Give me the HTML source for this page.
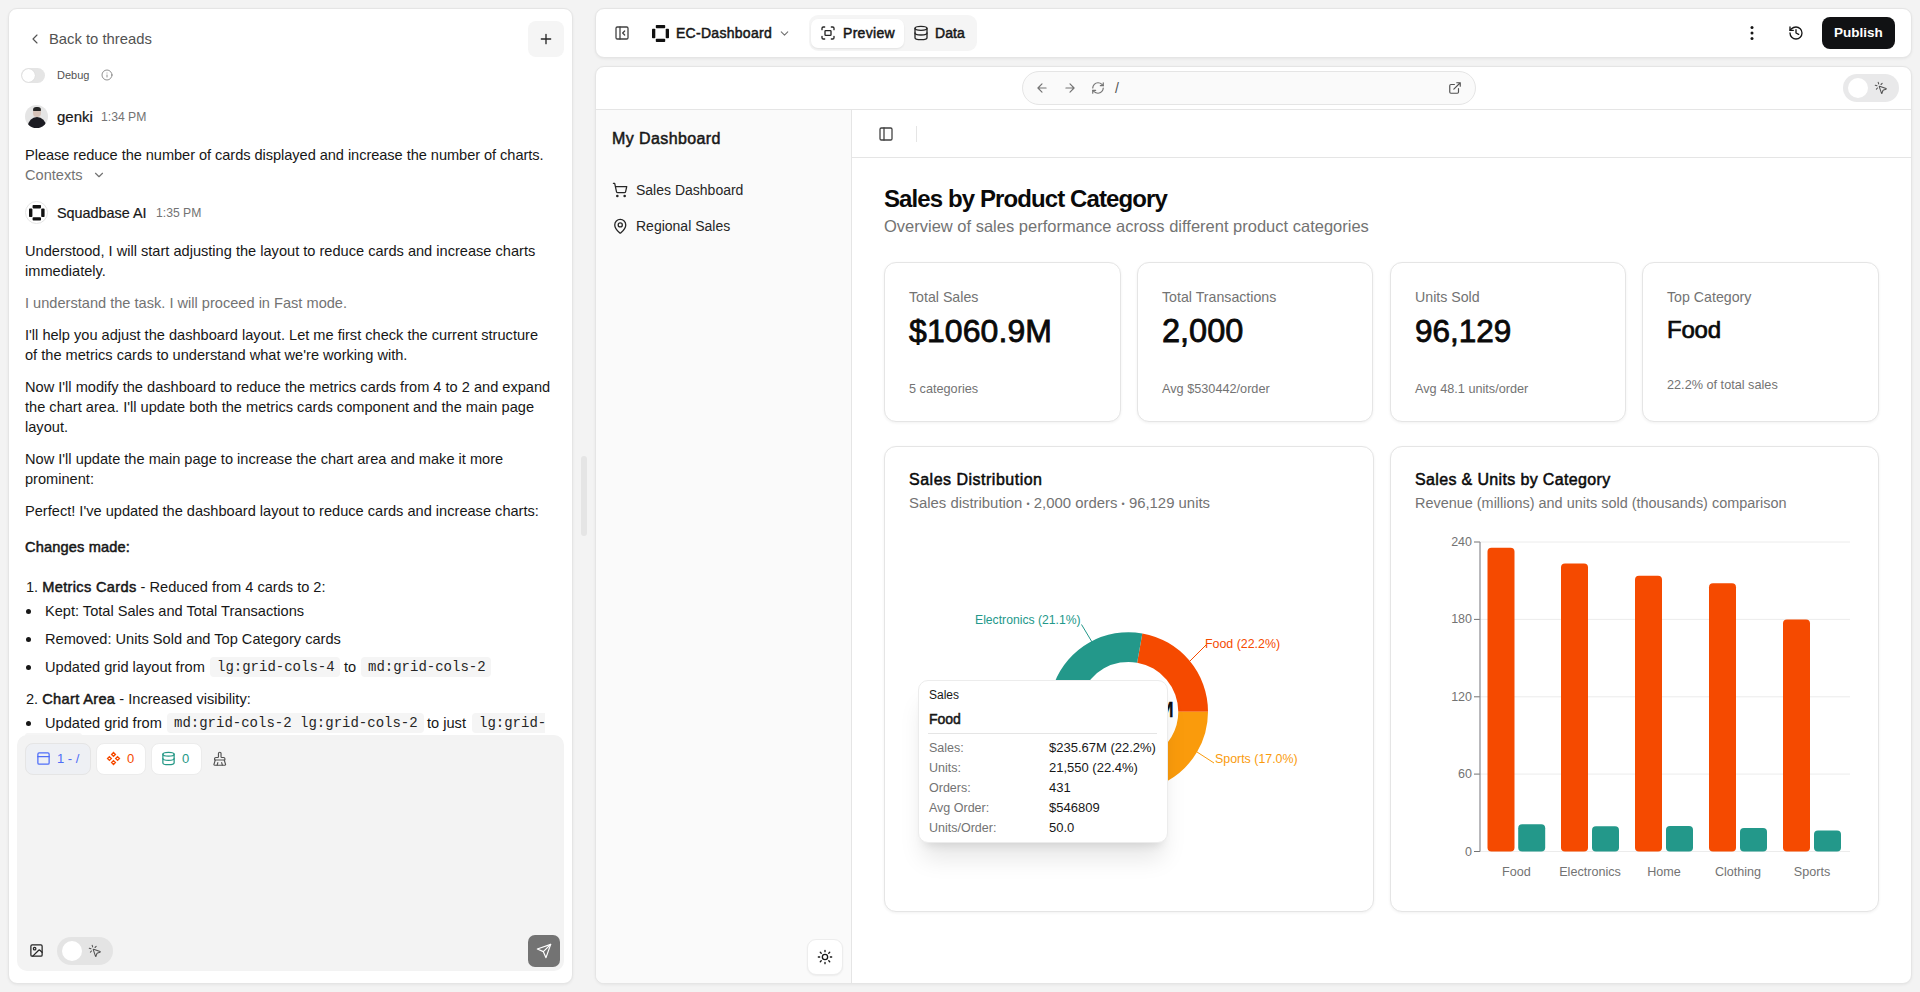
<!DOCTYPE html>
<html><head><meta charset="utf-8">
<style>
*{box-sizing:border-box;margin:0;padding:0}
html,body{width:1920px;height:992px;overflow:hidden;background:#f3f3f3;font-family:"Liberation Sans",sans-serif;color:#171717}
.a{position:absolute}
.t{position:absolute;white-space:nowrap;line-height:20px}
svg{position:absolute;overflow:visible}
.ic{fill:none;stroke:currentColor;stroke-width:2;stroke-linecap:round;stroke-linejoin:round}
.card{position:absolute;background:#fff;border:1px solid #e5e5e5;border-radius:12px;box-shadow:0 1px 3px rgba(0,0,0,.06)}
.p{font-size:14.6px;color:#171717}
.code{position:absolute;background:#f5f5f5;border-radius:4px;font-family:"Liberation Mono",monospace;font-size:14px;line-height:20px;padding:0 7px;white-space:nowrap;color:#262626}
.sb{font-weight:normal!important;-webkit-text-stroke-width:0.5px}
</style></head><body>
<!-- LEFT PANEL -->
<div class="card" style="left:8px;top:8px;width:565px;height:976px;border-radius:9px"></div>
<svg class="ic" style="left:27px;top:31px;color:#525252;stroke-width:1.7" width="16" height="16" viewBox="0 0 24 24"><path d="M15 18l-6-6 6-6"/></svg>
<div class="t" style="left:49px;top:29px;font-size:14.8px;color:#525252">Back to threads</div>
<div class="a" style="left:528px;top:21px;width:36px;height:36px;background:#f5f5f5;border-radius:8px"></div>
<svg class="ic" style="left:538px;top:31px;color:#262626" width="16" height="16" viewBox="0 0 24 24"><path d="M12 5v14M5 12h14"/></svg>
<!-- debug toggle -->
<div class="a" style="left:21px;top:68px;width:24px;height:15px;background:#e5e5e5;border-radius:8px"></div>
<div class="a" style="left:22px;top:69px;width:13px;height:13px;background:#fff;border-radius:50%;box-shadow:0 0 1px rgba(0,0,0,.15)"></div>
<div class="t" style="left:57px;top:65px;font-size:11px;color:#525252">Debug</div>
<svg class="ic" style="left:101px;top:69px;color:#737373;stroke-width:1.6" width="12" height="12" viewBox="0 0 24 24"><circle cx="12" cy="12" r="10"/><path d="M12 16v-4M12 8h.01"/></svg>
<!-- genki -->
<div class="a" style="left:25px;top:105px;width:23px;height:23px;border-radius:50%;background:#e5e5e5;overflow:hidden">
 <div class="a" style="left:8px;top:3px;width:8px;height:9px;border-radius:45%;background:#d6c2b8"></div>
 <div class="a" style="left:8px;top:2px;width:8px;height:4px;border-radius:4px 4px 1px 1px;background:#262626"></div>
 <div class="a" style="left:3px;top:12px;width:18px;height:14px;border-radius:9px 9px 0 0;background:#1c1c22"></div>
</div>
<div class="t" style="left:57px;top:107px;font-size:15px;color:#171717;-webkit-text-stroke:0.2px #171717">genki</div>
<div class="t" style="left:101px;top:107px;font-size:12.2px;color:#737373">1:34 PM</div>
<div class="t p" style="left:25px;top:145px;letter-spacing:-0.05px">Please reduce the number of cards displayed and increase the number of charts.</div>
<div class="t p" style="left:25px;top:165px;color:#737373">Contexts</div>
<svg class="ic" style="left:92px;top:168px;color:#737373" width="14" height="14" viewBox="0 0 24 24"><path d="M6 9l6 6 6-6"/></svg>
<!-- squadbase -->
<div class="a" style="left:25px;top:201px;width:23px;height:23px;border-radius:50%;background:#fff;border:1px solid #e5e5e5"></div>
<svg style="left:29px;top:205px" width="15.6" height="15.6" viewBox="0 0 17 17"><g fill="#111"><rect x="3.9" y="0" width="9.2" height="3.7" rx="0.9"/><rect x="3.9" y="13.3" width="9.2" height="3.7" rx="0.9"/><rect x="0" y="3.9" width="3.7" height="9.2" rx="0.9"/><rect x="13.3" y="3.9" width="3.7" height="9.2" rx="0.9"/></g></svg>
<div class="t" style="left:57px;top:203px;font-size:14.4px;color:#171717;-webkit-text-stroke:0.2px #171717">Squadbase AI</div>
<div class="t" style="left:156px;top:203px;font-size:12.2px;color:#737373">1:35 PM</div>
<!-- paragraphs -->
<div class="t p" style="left:25px;top:241px">Understood, I will start adjusting the layout to reduce cards and increase charts<br>immediately.</div>
<div class="t p" style="left:25px;top:293px;color:#737373">I understand the task. I will proceed in Fast mode.</div>
<div class="t p" style="left:25px;top:325px">I'll help you adjust the dashboard layout. Let me first check the current structure<br>of the metrics cards to understand what we're working with.</div>
<div class="t p" style="left:25px;top:377px">Now I'll modify the dashboard to reduce the metrics cards from 4 to 2 and expand<br>the chart area. I'll update both the metrics cards component and the main page<br>layout.</div>
<div class="t p" style="left:25px;top:449px">Now I'll update the main page to increase the chart area and make it more<br>prominent:</div>
<div class="t p" style="left:25px;top:501px">Perfect! I've updated the dashboard layout to reduce cards and increase charts:</div>
<div class="t p sb" style="left:25px;top:537px;letter-spacing:0.15px">Changes made:</div>
<div class="t p" style="left:26px;top:577px">1. <b class="sb" style="letter-spacing:0.33px">Metrics Cards</b> - Reduced from 4 cards to 2:</div>
<div class="a" style="left:26px;top:609px;width:5px;height:5px;border-radius:50%;background:#171717"></div>
<div class="t p" style="left:45px;top:601px">Kept: Total Sales and Total Transactions</div>
<div class="a" style="left:26px;top:637px;width:5px;height:5px;border-radius:50%;background:#171717"></div>
<div class="t p" style="left:45px;top:629px">Removed: Units Sold and Top Category cards</div>
<div class="a" style="left:26px;top:665px;width:5px;height:5px;border-radius:50%;background:#171717"></div>
<div class="t p" style="left:45px;top:657px">Updated grid layout from</div>
<div class="code" style="left:210px;top:657px;width:130px">lg:grid-cols-4</div>
<div class="t p" style="left:344px;top:657px">to</div>
<div class="code" style="left:361px;top:657px;width:130px">md:grid-cols-2</div>
<div class="t p" style="left:26px;top:689px">2. <b class="sb" style="letter-spacing:0.33px">Chart Area</b> - Increased visibility:</div>
<div class="a" style="left:26px;top:721px;width:5px;height:5px;border-radius:50%;background:#171717"></div>
<div class="t p" style="left:45px;top:713px">Updated grid from</div>
<div class="code" style="left:167px;top:713px;width:257px">md:grid-cols-2 lg:grid-cols-2</div>
<div class="t p" style="left:427px;top:713px">to just</div>
<div class="code" style="left:472px;top:713px;width:73px;overflow:hidden;padding-right:0;border-radius:4px 0 0 4px">lg:grid-</div>
<div class="a" style="left:25px;top:733px;width:57px;height:6px;background:#f5f5f5;border-radius:4px"></div>
<!-- resize handle -->
<div class="a" style="left:581px;top:456px;width:6px;height:80px;background:#e5e5e5;border-radius:3px"></div>
<!-- input area -->
<div class="a" style="left:17px;top:735px;width:547px;height:236px;background:#f3f3f3;border-radius:10px"></div>
<div class="a" style="left:25px;top:743px;width:66px;height:32px;background:#eef0f4;border:1px solid #e5e5e5;border-radius:8px"></div>
<svg class="ic" style="left:36px;top:751px;color:#4f6ef7;stroke-width:2" width="15" height="15" viewBox="0 0 24 24"><rect x="3" y="3" width="18" height="18" rx="2"/><path d="M3 9h18"/></svg>
<div class="t" style="left:57px;top:749px;font-size:13px;color:#4f6ef7">1 - /</div>
<div class="a" style="left:96px;top:743px;width:50px;height:32px;background:#fff;border:1px solid #ececec;border-radius:8px"></div>
<svg style="left:106px;top:751px" width="15" height="15" viewBox="0 0 24 24" fill="none" stroke="#f54a00" stroke-width="2.2"><path d="M12 2.5l3 3-3 3-3-3zM12 15.5l3 3-3 3-3-3zM5.5 9l3 3-3 3-3-3zM18.5 9l3 3-3 3-3-3z"/></svg>
<div class="t" style="left:127px;top:749px;font-size:13px;color:#f54a00">0</div>
<div class="a" style="left:151px;top:743px;width:51px;height:32px;background:#fff;border:1px solid #ececec;border-radius:8px"></div>
<svg class="ic" style="left:161px;top:751px;color:#259886" width="15" height="15" viewBox="0 0 24 24"><ellipse cx="12" cy="5" rx="9" ry="3"/><path d="M3 5v14a9 3 0 0 0 18 0V5"/><path d="M3 12a9 3 0 0 0 18 0"/></svg>
<div class="t" style="left:182px;top:749px;font-size:13px;color:#259886">0</div>
<svg class="ic" style="left:212px;top:751px;color:#525252;stroke-width:1.8" width="15.5" height="15.5" viewBox="0 0 24 24"><path d="M16 22l-1-4"/><path d="M19 13.99a1 1 0 0 0 1-1V12a2 2 0 0 0-2-2h-3a1 1 0 0 1-1-1V4a2 2 0 0 0-4 0v5a1 1 0 0 1-1 1H6a2 2 0 0 0-2 2v.99a1 1 0 0 0 1 1"/><path d="M5 14h14l1.973 6.767A1 1 0 0 1 20 22H4a1 1 0 0 1-.973-1.233z"/><path d="M8 22l1-4"/></svg>
<!-- bottom controls -->
<svg class="ic" style="left:29px;top:943px;color:#262626;stroke-width:2" width="15" height="15" viewBox="0 0 24 24"><rect x="3" y="3" width="18" height="18" rx="2"/><circle cx="9" cy="9" r="2"/><path d="M21 15l-3.1-3.1a2 2 0 0 0-2.8 0L6 21"/></svg>
<div class="a" style="left:57px;top:937px;width:56px;height:28px;background:#e4e4e4;border-radius:14px"></div>
<div class="a" style="left:62px;top:941px;width:20px;height:20px;background:#fff;border-radius:50%"></div>
<svg class="ic" style="left:88px;top:944px;color:#525252;stroke-width:1.8" width="14" height="14" viewBox="0 0 24 24"><path d="M14 4.1L12 6M5.1 8l-2.9-.8M6 12l-1.9 2M7.2 2.2L8 5.1"/><path d="M9.04 9.63a.5.5 0 0 1 .59-.59l11 4a.5.5 0 0 1 .01.94l-4.26 1.42a2 2 0 0 0-1.26 1.26l-1.42 4.26a.5.5 0 0 1-.94-.01z"/></svg>
<div class="a" style="left:528px;top:935px;width:32px;height:32px;background:#737373;border-radius:7px"></div>
<svg class="ic" style="left:536px;top:943px;color:#fff;stroke-width:1.8" width="16" height="16" viewBox="0 0 24 24"><path d="M22 2L11 13"/><path d="M22 2l-7 20-4-9-9-4z"/></svg>

<!-- RIGHT TOP BAR -->
<div class="card" style="left:595px;top:8px;width:1317px;height:50px;border-radius:9px"></div>
<svg class="ic" style="left:614px;top:25px;color:#404040;stroke-width:1.9" width="16" height="16" viewBox="0 0 24 24"><rect x="3" y="3" width="18" height="18" rx="2"/><path d="M9 3v18M16 15l-3-3 3-3"/></svg>
<svg style="left:651.5px;top:24.5px" width="17" height="17" viewBox="0 0 17 17"><g fill="#111"><rect x="3.8" y="0" width="9.4" height="3.3" rx="0.8"/><rect x="3.8" y="13.7" width="9.4" height="3.3" rx="0.8"/><rect x="0" y="3.7" width="3.3" height="9.6" rx="0.8"/><rect x="13.7" y="3.7" width="3.3" height="9.6" rx="0.8"/></g></svg>
<div class="t sb" style="left:676px;top:23px;font-size:14px;color:#171717;letter-spacing:0.28px">EC-Dashboard</div>
<svg class="ic" style="left:778px;top:27px;color:#737373;stroke-width:2" width="13" height="13" viewBox="0 0 24 24"><path d="M6 9l6 6 6-6"/></svg>
<div class="a" style="left:809px;top:15px;width:168px;height:36px;background:#f5f5f5;border-radius:9px"></div>
<div class="a" style="left:811px;top:19px;width:93px;height:29px;background:#fff;border-radius:7px;box-shadow:0 1px 2px rgba(0,0,0,.08)"></div>
<svg class="ic" style="left:820px;top:25px;color:#262626;stroke-width:2" width="16" height="16" viewBox="0 0 24 24"><path d="M3 7V5a2 2 0 0 1 2-2h2M17 3h2a2 2 0 0 1 2 2v2M21 17v2a2 2 0 0 1-2 2h-2M7 21H5a2 2 0 0 1-2-2v-2"/><rect x="7.5" y="8.5" width="9" height="7" rx="1"/></svg>
<div class="t sb" style="left:843px;top:23px;font-size:14px;color:#171717;letter-spacing:0.3px">Preview</div>
<svg class="ic" style="left:913px;top:25px;color:#262626;stroke-width:2" width="16" height="16" viewBox="0 0 24 24"><ellipse cx="12" cy="5" rx="9" ry="3"/><path d="M3 5v14a9 3 0 0 0 18 0V5"/><path d="M3 12a9 3 0 0 0 18 0"/></svg>
<div class="t sb" style="left:935px;top:23px;font-size:14px;color:#171717;letter-spacing:0.1px">Data</div>
<svg style="left:1749px;top:25px" width="6" height="16" viewBox="0 0 6 16"><circle cx="3" cy="2.5" r="1.5" fill="#171717"/><circle cx="3" cy="8" r="1.5" fill="#171717"/><circle cx="3" cy="13.5" r="1.5" fill="#171717"/></svg>
<svg class="ic" style="left:1788px;top:25px;color:#171717;stroke-width:2" width="16" height="16" viewBox="0 0 24 24"><path d="M3 12a9 9 0 1 0 9-9 9.75 9.75 0 0 0-6.74 2.74L3 8"/><path d="M3 3v5h5"/><path d="M12 7v5l4 2"/></svg>
<div class="a" style="left:1822px;top:17px;width:73px;height:32px;background:#111214;border-radius:8px"></div>
<div class="t" style="left:1822px;top:23px;width:73px;text-align:center;font-size:13.5px;font-weight:bold;color:#fff">Publish</div>

<!-- RIGHT CONTENT CARD -->
<div class="card" style="left:595px;top:66px;width:1317px;height:918px;border-radius:9px;overflow:hidden">
  <div class="a" style="left:0;top:42px;width:1317px;height:1px;background:#e5e5e5"></div>
  <div class="a" style="left:0;top:43px;width:256px;height:874px;background:#fafafa;border-right:1px solid #e5e5e5"></div>
  <div class="a" style="left:256px;top:90px;width:1060px;height:1px;background:#e5e5e5"></div>
</div>
<!-- url bar -->
<div class="a" style="left:1022px;top:71px;width:454px;height:34px;background:#fafafa;border:1px solid #e5e5e5;border-radius:17px"></div>
<svg class="ic" style="left:1035px;top:81px;color:#737373;stroke-width:2" width="14" height="14" viewBox="0 0 24 24"><path d="M19 12H5M12 19l-7-7 7-7"/></svg>
<svg class="ic" style="left:1063px;top:81px;color:#737373;stroke-width:2" width="14" height="14" viewBox="0 0 24 24"><path d="M5 12h14M12 5l7 7-7 7"/></svg>
<svg class="ic" style="left:1091px;top:81px;color:#737373;stroke-width:2" width="14" height="14" viewBox="0 0 24 24"><path d="M3 12a9 9 0 0 1 9-9 9.75 9.75 0 0 1 6.74 2.74L21 8"/><path d="M21 3v5h-5"/><path d="M21 12a9 9 0 0 1-9 9 9.75 9.75 0 0 1-6.74-2.74L3 16"/><path d="M8 16H3v5"/></svg>
<div class="t" style="left:1115px;top:78px;font-size:14px;color:#525252">/</div>
<svg class="ic" style="left:1448px;top:81px;color:#525252;stroke-width:2" width="14" height="14" viewBox="0 0 24 24"><path d="M15 3h6v6M10 14L21 3M18 13v6a2 2 0 0 1-2 2H5a2 2 0 0 1-2-2V8a2 2 0 0 1 2-2h6"/></svg>
<div class="a" style="left:1843px;top:74px;width:56px;height:28px;background:#e9e9ea;border-radius:14px"></div>
<div class="a" style="left:1848px;top:78px;width:20px;height:20px;background:#fff;border-radius:50%"></div>
<svg class="ic" style="left:1874px;top:81px;color:#525252;stroke-width:1.8" width="14" height="14" viewBox="0 0 24 24"><path d="M14 4.1L12 6M5.1 8l-2.9-.8M6 12l-1.9 2M7.2 2.2L8 5.1"/><path d="M9.04 9.63a.5.5 0 0 1 .59-.59l11 4a.5.5 0 0 1 .01.94l-4.26 1.42a2 2 0 0 0-1.26 1.26l-1.42 4.26a.5.5 0 0 1-.94-.01z"/></svg>
<!-- sidebar -->
<div class="t sb" style="left:612px;top:129px;font-size:16px;color:#171717;letter-spacing:0.4px">My Dashboard</div>
<svg class="ic" style="left:611.5px;top:181.5px;color:#262626;stroke-width:1.9" width="16" height="16" viewBox="0 0 24 24"><circle cx="8" cy="21" r="1"/><circle cx="19" cy="21" r="1"/><path d="M2.05 2.05h2l2.66 12.42a2 2 0 0 0 2 1.58h9.78a2 2 0 0 0 1.95-1.57l1.65-7.43H5.12"/></svg>
<div class="t" style="left:636px;top:180px;font-size:14px;color:#262626">Sales Dashboard</div>
<svg class="ic" style="left:611.5px;top:217.5px;color:#262626;stroke-width:1.9" width="16.5" height="16.5" viewBox="0 0 24 24"><path d="M20 10c0 4.99-5.54 10.19-7.4 11.8a1 1 0 0 1-1.2 0C9.54 20.19 4 14.99 4 10a8 8 0 0 1 16 0"/><circle cx="12" cy="10" r="3"/></svg>
<div class="t" style="left:636px;top:216px;font-size:14px;color:#262626">Regional Sales</div>
<div class="a" style="left:807px;top:939px;width:36px;height:36px;background:#fff;border:1px solid #ededed;border-radius:9px;box-shadow:0 1px 2px rgba(0,0,0,.06)"></div>
<svg class="ic" style="left:817px;top:949px;color:#171717;stroke-width:2" width="16" height="16" viewBox="0 0 24 24"><circle cx="12" cy="12" r="4"/><path d="M12 2v2M12 20v2M4.93 4.93l1.41 1.41M17.66 17.66l1.41 1.41M2 12h2M20 12h2M6.34 17.66l-1.41 1.41M19.07 4.93l-1.41 1.41"/></svg>
<!-- content header -->
<svg class="ic" style="left:878px;top:126px;color:#404040;stroke-width:1.9" width="16" height="16" viewBox="0 0 24 24"><rect x="3" y="3" width="18" height="18" rx="2"/><path d="M9 3v18"/></svg>
<div class="a" style="left:916px;top:126px;width:1px;height:16px;background:#e5e5e5"></div>
<!-- title -->
<div class="t" style="left:884px;top:184px;font-size:24px;line-height:30px;font-weight:bold;color:#0a0a0a;letter-spacing:-0.9px">Sales by Product Category</div>
<div class="t" style="left:884px;top:216px;font-size:16.5px;color:#737373">Overview of sales performance across different product categories</div>

<div class="card" style="left:884px;top:262px;width:237px;height:160px"></div>
<div class="t" style="left:909px;top:287px;font-size:14.2px;color:#737373">Total Sales</div>
<div class="t" style="left:909px;top:311px;font-size:32px;line-height:40px;color:#0a0a0a;-webkit-text-stroke:0.8px #0a0a0a;letter-spacing:0.1px">$1060.9M</div>
<div class="t" style="left:909px;top:379px;font-size:12.7px;color:#737373">5 categories</div>
<div class="card" style="left:1137px;top:262px;width:236px;height:160px"></div>
<div class="t" style="left:1162px;top:287px;font-size:14.2px;color:#737373">Total Transactions</div>
<div class="t" style="left:1162px;top:311px;font-size:32.5px;line-height:40px;color:#0a0a0a;-webkit-text-stroke:0.8px #0a0a0a;letter-spacing:0px">2,000</div>
<div class="t" style="left:1162px;top:379px;font-size:12.7px;color:#737373">Avg $530442/order</div>
<div class="card" style="left:1390px;top:262px;width:236px;height:160px"></div>
<div class="t" style="left:1415px;top:287px;font-size:14.2px;color:#737373">Units Sold</div>
<div class="t" style="left:1415px;top:311px;font-size:31.5px;line-height:40px;color:#0a0a0a;-webkit-text-stroke:0.8px #0a0a0a;letter-spacing:0px">96,129</div>
<div class="t" style="left:1415px;top:379px;font-size:12.7px;color:#737373">Avg 48.1 units/order</div>
<div class="card" style="left:1642px;top:262px;width:237px;height:160px"></div>
<div class="t" style="left:1667px;top:287px;font-size:14.2px;color:#737373">Top Category</div>
<div class="t" style="left:1667px;top:314px;font-size:24px;line-height:32px;color:#0a0a0a;-webkit-text-stroke:0.7px #0a0a0a;letter-spacing:-0.2px">Food</div>
<div class="t" style="left:1667px;top:375px;font-size:12.7px;color:#737373">22.2% of total sales</div>
<div class="card" style="left:884px;top:446px;width:490px;height:466px"></div>
<div class="card" style="left:1390px;top:446px;width:489px;height:466px"></div>
<div class="t sb" style="left:909px;top:470px;font-size:16px;color:#0a0a0a;letter-spacing:0.5px">Sales Distribution</div>
<div class="t" style="left:909px;top:493px;font-size:14.9px;color:#737373">Sales distribution <span style="font-size:9px;position:relative;top:-1px">•</span> 2,000 orders <span style="font-size:9px;position:relative;top:-1px">•</span> 96,129 units</div>
<div class="t sb" style="left:1415px;top:470px;font-size:16px;color:#0a0a0a;letter-spacing:0.35px">Sales &amp; Units by Category</div>
<div class="t" style="left:1415px;top:493px;font-size:14.45px;color:#737373">Revenue (millions) and units sold (thousands) comparison</div>
<svg style="left:0;top:0" width="1920" height="992" viewBox="0 0 1920 992"><path d="M1208.00 711.70A79.5 79.5 0 0 0 1142.31 633.41L1137.15 662.66A49.8 49.8 0 0 1 1178.30 711.70Z" fill="#f54a00"/><path d="M1142.31 633.41A79.5 79.5 0 0 0 1054.28 683.21L1082.01 693.85A49.8 49.8 0 0 1 1137.15 662.66Z" fill="#23988a"/><path d="M1054.28 683.21A79.5 79.5 0 0 0 1078.47 773.48L1097.16 750.40A49.8 49.8 0 0 1 1082.01 693.85Z" fill="#104e64"/><path d="M1078.47 773.48A79.5 79.5 0 0 0 1167.04 781.23L1152.64 755.26A49.8 49.8 0 0 1 1097.16 750.40Z" fill="#ffb900"/><path d="M1167.04 781.23A79.5 79.5 0 0 0 1208.00 711.70L1178.30 711.70A49.8 49.8 0 0 1 1152.64 755.26Z" fill="#fa9b0c"/><path d="M1092 642L1081.5 624.5" stroke="#23988a" fill="none"/><path d="M1190 661L1206 645" stroke="#f54a00" fill="none"/><path d="M1197 752L1214 763" stroke="#fa9b0c" fill="none"/></svg>
<div class="t" style="left:974px;width:200px;text-align:right;top:696px;font-size:21.5px;line-height:28px;color:#0a0a0a;-webkit-text-stroke:0.6px #0a0a0a">$1060.9M</div>
<div class="t" style="left:975px;top:610px;font-size:12.2px;color:#23988a">Electronics (21.1%)</div>
<div class="t" style="left:1205px;top:634px;font-size:12.4px;color:#f54a00">Food (22.2%)</div>
<div class="t" style="left:1215px;top:749px;font-size:12.4px;color:#fa9b0c">Sports (17.0%)</div>
<div class="a" style="left:918px;top:680px;width:250px;height:163px;background:#fff;border:1px solid #ececec;border-radius:10px;box-shadow:0 20px 25px -5px rgba(0,0,0,.1),0 8px 10px -6px rgba(0,0,0,.1)"></div>
<div class="t" style="left:929px;top:685px;font-size:12px;color:#171717">Sales</div>
<div class="t sb" style="left:929px;top:709px;font-size:14px;color:#171717">Food</div>
<div class="a" style="left:928px;top:733px;width:229px;height:1px;background:#e5e5e5"></div>
<div class="t" style="left:929px;top:738px;font-size:12.5px;color:#737373">Sales:</div>
<div class="t" style="left:1049px;top:738px;font-size:13px;color:#171717">$235.67M (22.2%)</div>
<div class="t" style="left:929px;top:758px;font-size:12.5px;color:#737373">Units:</div>
<div class="t" style="left:1049px;top:758px;font-size:13px;color:#171717">21,550 (22.4%)</div>
<div class="t" style="left:929px;top:778px;font-size:12.5px;color:#737373">Orders:</div>
<div class="t" style="left:1049px;top:778px;font-size:13px;color:#171717">431</div>
<div class="t" style="left:929px;top:798px;font-size:12.5px;color:#737373">Avg Order:</div>
<div class="t" style="left:1049px;top:798px;font-size:13px;color:#171717">$546809</div>
<div class="t" style="left:929px;top:818px;font-size:12.5px;color:#737373">Units/Order:</div>
<div class="t" style="left:1049px;top:818px;font-size:13px;color:#171717">50.0</div>
<svg style="left:0;top:0" width="1920" height="992" viewBox="0 0 1920 992"><path d="M1480 851.5H1850" stroke="#ececec" stroke-width="1"/><path d="M1474 851.5H1480" stroke="#737373" stroke-width="1"/><path d="M1480 774.1H1850" stroke="#ececec" stroke-width="1"/><path d="M1474 774.1H1480" stroke="#737373" stroke-width="1"/><path d="M1480 696.8H1850" stroke="#ececec" stroke-width="1"/><path d="M1474 696.8H1480" stroke="#737373" stroke-width="1"/><path d="M1480 619.4H1850" stroke="#ececec" stroke-width="1"/><path d="M1474 619.4H1480" stroke="#737373" stroke-width="1"/><path d="M1480 542.0H1850" stroke="#ececec" stroke-width="1"/><path d="M1474 542.0H1480" stroke="#737373" stroke-width="1"/><path d="M1480 542.0V851.5" stroke="#8a8a90" stroke-width="1.2"/><rect x="1487.5" y="547.8" width="27" height="303.7" rx="4" fill="#f54a00"/><rect x="1518.2" y="824.2" width="27" height="27.3" rx="4" fill="#23988a"/><rect x="1561" y="563.5" width="27" height="288.0" rx="4" fill="#f54a00"/><rect x="1592" y="826.3" width="27" height="25.2" rx="4" fill="#23988a"/><rect x="1635" y="575.7" width="27" height="275.8" rx="4" fill="#f54a00"/><rect x="1666" y="826" width="27" height="25.5" rx="4" fill="#23988a"/><rect x="1709" y="583.3" width="27" height="268.2" rx="4" fill="#f54a00"/><rect x="1740" y="828" width="27" height="23.5" rx="4" fill="#23988a"/><rect x="1783" y="619.6" width="27" height="231.9" rx="4" fill="#f54a00"/><rect x="1814" y="830.6" width="27" height="20.9" rx="4" fill="#23988a"/></svg>
<div class="t" style="left:1420px;width:52px;text-align:right;top:841.5px;font-size:12.5px;color:#737373">0</div>
<div class="t" style="left:1420px;width:52px;text-align:right;top:764.1px;font-size:12.5px;color:#737373">60</div>
<div class="t" style="left:1420px;width:52px;text-align:right;top:686.8px;font-size:12.5px;color:#737373">120</div>
<div class="t" style="left:1420px;width:52px;text-align:right;top:609.4px;font-size:12.5px;color:#737373">180</div>
<div class="t" style="left:1420px;width:52px;text-align:right;top:532.0px;font-size:12.5px;color:#737373">240</div>
<div class="t" style="left:1466.3px;width:100px;text-align:center;top:862px;font-size:12.6px;color:#737373">Food</div>
<div class="t" style="left:1540.0px;width:100px;text-align:center;top:862px;font-size:12.6px;color:#737373">Electronics</div>
<div class="t" style="left:1614.0px;width:100px;text-align:center;top:862px;font-size:12.6px;color:#737373">Home</div>
<div class="t" style="left:1688.0px;width:100px;text-align:center;top:862px;font-size:12.6px;color:#737373">Clothing</div>
<div class="t" style="left:1762.0px;width:100px;text-align:center;top:862px;font-size:12.6px;color:#737373">Sports</div>
</body></html>
